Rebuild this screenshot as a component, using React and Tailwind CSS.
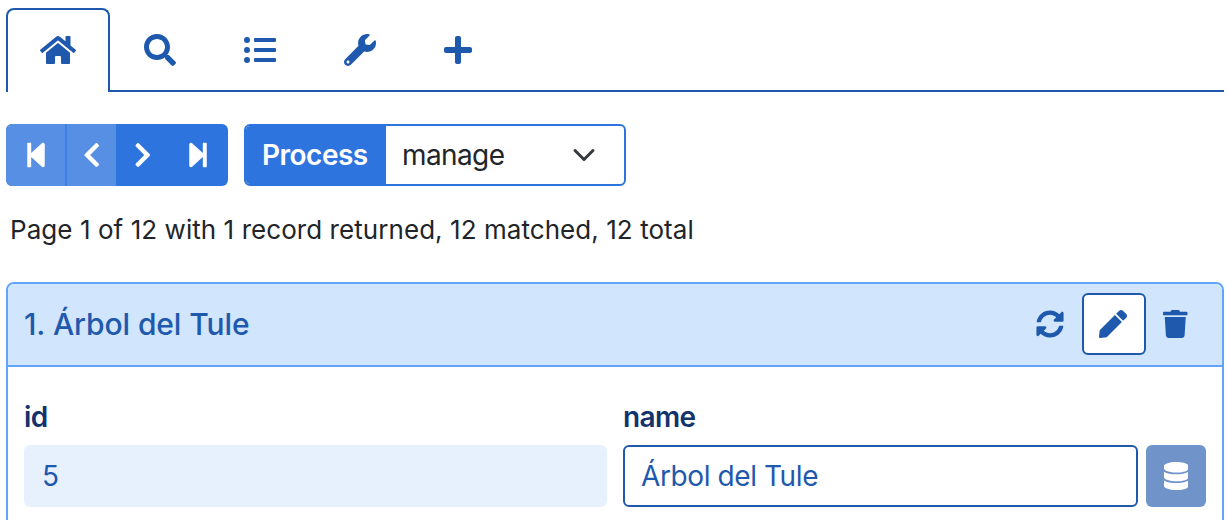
import React from "react";
import {
  FaHome, FaSearch, FaListUl, FaWrench, FaPlus, FaStepBackward, FaStepForward,
  FaChevronLeft, FaChevronRight, FaSyncAlt, FaPen, FaTrash, FaDatabase,
} from "react-icons/fa";

function Tabs() {
  return (
    <nav className="flex h-[84px] pr-1 pl-1.5 text-[32px] text-[#1f59ad]">
      <div className="flex w-[104px] items-center justify-center rounded-t-lg border-2 border-b-0 border-[#1f59ad]">
        <FaHome className="mb-0.5 h-8 w-9" />
      </div>
      <div className="flex flex-1 items-center border-b-2 border-[#1f59ad] pt-0.5 pl-[34px]">
        <FaSearch className="mr-[68px]" />
        <FaListUl className="mr-[68px]" />
        <FaWrench className="mr-[68px]" />
        <FaPlus className="h-8 w-7" />
      </div>
    </nav>
  );
}

function Toolbar() {
  return (
    <div className="mt-8 ml-1.5 flex h-[62px] gap-4">
      <div className="flex overflow-hidden rounded-md bg-[#2d74df] text-[28px] text-white">
        <div className="flex w-[61px] items-center justify-center border-r-2 border-[#3d7fe2] bg-[#578fe5]">
          <FaStepBackward />
        </div>
        <div className="flex w-[49px] items-center justify-center bg-[#578fe5]">
          <FaChevronLeft className="h-7 w-[17.5px]" />
        </div>
        <div className="flex w-[52px] items-center justify-center pl-0.5">
          <FaChevronRight className="h-7 w-[17.5px]" />
        </div>
        <div className="flex w-[60px] items-center justify-center">
          <FaStepForward />
        </div>
      </div>
      <div className="flex w-[382px] overflow-hidden rounded-md border-2 border-[#2d74df] text-[28px]">
        <div className="flex w-[140px] items-center bg-[#2d74df] pl-4 font-[580] tracking-[-0.5px] text-white">
          <span>Process</span>
        </div>
        <div className="flex flex-1 items-center justify-between pr-7 pl-4 text-[#212529]">
          <span className="tracking-[-0.6px]">manage</span>
          <svg className="h-6 w-6" viewBox="0 0 16 16" fill="none" stroke="#343a40" strokeWidth="2" strokeLinecap="round" strokeLinejoin="round">
            <path d="m2 5 6 6 6-6" />
          </svg>
        </div>
      </div>
    </div>
  );
}

function Record() {
  return (
    <section className="ml-1.5 h-[260px] w-[1218px] rounded-t-lg border-2 border-b-0 border-[#62a4f7]">
      <header className="flex h-[83px] items-center rounded-t-md border-b-2 border-[#62a4f7] bg-[#d1e5fd] pl-4 text-[28px] text-[#1f59ad]">
        <h2 className="flex-1 text-[30px] font-[540] tracking-[-0.1px]">1. Árbol del Tule</h2>
        <div className="flex items-center pb-0.5">
          <FaSyncAlt className="mr-[18px]" />
          <button className="mr-[17px] flex h-[62px] w-16 items-center justify-center rounded-md border-2 border-[#1f59ad] bg-white pr-0.5">
            <FaPen />
          </button>
          <FaTrash className="mr-[34.5px] h-7 w-[24.5px]" />
        </div>
      </header>
      <div className="flex gap-4 px-4 pt-[29px] text-[28px] text-[#1f59ad]">
        <div className="w-[583px]">
          <div className="h-[49px] leading-[43px] font-[580] tracking-[-0.5px] text-[#12336b]">id</div>
          <div className="flex h-[62px] items-center rounded-md bg-[#e7f1fe] pl-[18px]">5</div>
        </div>
        <div className="w-[583px]">
          <div className="h-[49px] leading-[43px] font-[580] tracking-[-0.6px] text-[#12336b]">name</div>
          <div className="flex gap-2">
            <div className="flex h-[62px] w-[515px] items-center rounded-md border-2 border-[#1f59ad] pl-4 tracking-[-0.4px]">Árbol del Tule</div>
            <div className="flex h-[62px] w-[60px] items-center justify-center rounded-md bg-[#7094ca] text-white">
              <FaDatabase className="h-7 w-[24.5px]" />
            </div>
          </div>
        </div>
      </div>
    </section>
  );
}

export default function App() {
  return (
    <main className="h-[520px] w-[1228px] overflow-hidden bg-white pt-2 font-['Inter',sans-serif]">
      <Tabs />
      <Toolbar />
      <p className="mt-6 mb-[32px] ml-[10px] h-10 text-[26px] leading-[40px] tracking-[0.06px] text-[#212529]">
        Page 1 of 12 with 1 record returned, 12 matched, 12 total
      </p>
      <Record />
    </main>
  );
}
